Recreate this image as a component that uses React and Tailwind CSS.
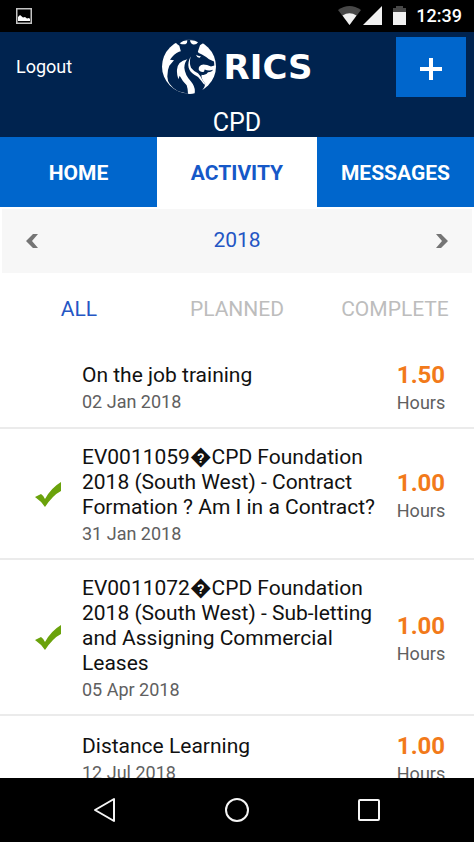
import React, { useState } from "react";

const tabs = ["HOME", "ACTIVITY", "MESSAGES"];
const filters = ["ALL", "PLANNED", "COMPLETE"];

const activities = [
    { id: 1, title: "On the job training", date: "02 Jan 2018", hours: "1.50", complete: false },
    {
        id: 2,
        title: "EV0011059\uFFFDCPD Foundation 2018 (South West) - Contract Formation ? Am I in a Contract?",
        date: "31 Jan 2018",
        hours: "1.00",
        complete: true,
    },
    {
        id: 3,
        title: "EV0011072\uFFFDCPD Foundation 2018 (South West) - Sub-letting and Assigning Commercial Leases",
        date: "05 Apr 2018",
        hours: "1.00",
        complete: true,
    },
    { id: 4, title: "Distance Learning", date: "12 Jul 2018", hours: "1.00", complete: false },
];

const StatusBar = () => (
    <div className="flex h-8 shrink-0 items-center justify-between bg-black pl-4 pr-3 text-white">
        <svg width="16" height="16" viewBox="0 0 16 16">
            <rect x="0.75" y="0.75" width="14.5" height="14.5" fill="none" stroke="#c4c4c4" strokeWidth="1.5" />
            <path d="M2 13V9l2-2 3 2.500 2-.500 2 1.500 2-.500 1 1v2z" fill="#fff" />
        </svg>
        <div className="flex items-center">
            <svg width="70" height="20" viewBox="0 0 70 20">
                <path d="M0 4Q11.500-4 23 4L11.500 19z" fill="#484848" />
                <path d="M4.500 9.500Q11.500 5 18.500 9.500L11.500 19z" fill="#f1f1f1" />
                <path d="M44 0v19H25z" fill="#f1f1f1" />
                <path d="M55 2h3V0h7v2h3v4H55z" fill="#484848" />
                <path d="M55 6h13v13H55z" fill="#f1f1f1" />
            </svg>
            <span className="ml-2 text-lg font-medium">12:39</span>
        </div>
    </div>
);

const Logo = () => (
    <div className="flex items-center gap-2">
        <svg width="54" height="55" viewBox="0 0 162 164">
            <circle cx="81" cy="82" r="81" fill="#fff" />
            <g fill="#00234f">
                {/* crown */}
                <path d="M36 0H126V10L114 18L106 42L58 42L52 20L44 14Z" />
                {/* head and mane */}
                <path d="M56 36L106 36Q110 44 120 46Q131 52 141 60L156 67L157 79L147 82Q135 76 124 76Q110 78 110 90Q113 100 126 98L128 91Q140 96 153 92Q150 99 138 99Q132 110 119 107Q116 116 126 129L130 134Q129 145 119 156L98 164L78 164L48 156Q16 138 16 112Q16 92 22 80L36 63L24 62Q36 44 51 38Z" />
            </g>
            <g fill="#fff">
                {/* crown jewels */}
                <path d="M53 12Q63 3 76 3Q77 11 70 15Q61 17 53 12Z" />
                <path d="M84 3Q98 2 108 9Q104 17 94 16Q85 13 84 3Z" />
                {/* mane strands */}
                <path d="M76 60Q46 66 45 92Q44 106 49 120L53 110Q62 128 74 138Q78 149 78 164Q89 165 98 162Q101 144 87 127Q69 109 67 86Q67 70 76 60Z" />
                <path d="M86 52Q81 72 87 86Q94 96 108 102Q116 110 122 123L133 139Q124 136 117 124Q111 113 97 107Q84 99 80 86Q76 70 86 52Z" />
                <path d="M102 47Q109 52 117 51L113 56Q105 57 102 47Z" />
            </g>
        </svg>
        <span className="font-['DejaVu_Sans'] text-[34px] leading-8 font-bold">RICS</span>
    </div>
);

const Header = () => (
    <header className="shrink-0 bg-[#00234f] text-white">
        <div className="grid grid-cols-[1fr_auto_1fr] items-start px-2 pt-[5px]">
            <button type="button" className="mt-4 justify-self-start px-2 text-lg">
                Logout
            </button>
            <div className="mt-0.5">
                <Logo />
            </div>
            <button
                type="button"
                aria-label="Add activity"
                className="flex h-[60px] w-[70px] items-center justify-center justify-self-end bg-[#0066cc] pt-1"
            >
                <svg width="24" height="24" viewBox="0 0 24 24">
                    <path d="M12 1v22M1 12h22" stroke="#fff" strokeWidth="4" />
                </svg>
            </button>
        </div>
        <h1 className="mt-3 text-center text-[25px] leading-7">CPD</h1>
    </header>
);

const TickIcon = () => (
    <svg width="28" height="26" viewBox="0 0 28 26">
        <path d="M1 15L7 12Q10 14 11 17Q17 6 27 0V9Q19 13 11 25Q7 19 1 15Z" fill="#6aa20b" />
    </svg>
);

const Chevron = ({ flip }) => (
    <svg width="12" height="14" viewBox="0 0 12 14" className={flip ? "rotate-180" : ""}>
        <path d="M7 0h5L6 7l6 7H7L0 7z" fill="#757575" />
    </svg>
);

const ActivityRow = ({ item }) => (
    <li className="flex items-center border-b-2 border-[#ebebeb] pt-4 pb-[10px]">
        <div className="flex w-[82px] shrink-0 justify-center pb-1 pl-[14px]">{item.complete && <TickIcon />}</div>
        <div className="min-w-0 flex-1">
            <h2 className="text-[21px] leading-[25px] text-[#111]">{item.title}</h2>
            <p className="text-lg leading-7 text-[#606060]">{item.date}</p>
        </div>
        <div className="w-[90px] shrink-0 pr-4 text-center">
            <p className="text-2xl leading-7 font-bold text-[#f27a1a]">{item.hours}</p>
            <p className="text-lg leading-7 text-[#606060]">Hours</p>
        </div>
    </li>
);

const App = () => {
    const [tab, setTab] = useState("ACTIVITY");
    const [filter, setFilter] = useState("ALL");
    const [year, setYear] = useState(2018);

    return (
        <div className="flex h-screen flex-col overflow-hidden bg-white font-[Roboto,sans-serif]">
            <StatusBar />
            <Header />

            <nav className="grid h-[70px] shrink-0 grid-cols-[1fr_160px_1fr]">
                {tabs.map((name) => (
                    <button
                        key={name}
                        type="button"
                        onClick={() => setTab(name)}
                        className={`pt-1 text-[21px] font-bold ${
                            tab === name ? "bg-white text-[#1558c8]" : "bg-[#0066cc] text-white"
                        }`}
                    >
                        {name}
                    </button>
                ))}
            </nav>

            <main className="flex-1 overflow-x-hidden overflow-y-auto [scrollbar-width:none]">
                {/* Year picker */}
                <div className="mx-0.5 mt-0.5 flex h-16 items-center justify-between bg-[#f7f7f7] px-6">
                    <button type="button" aria-label="Previous year" onClick={() => setYear(year - 1)}>
                        <Chevron />
                    </button>
                    <span className="text-[21px] text-[#2456c4]">{year}</span>
                    <button type="button" aria-label="Next year" onClick={() => setYear(year + 1)}>
                        <Chevron flip />
                    </button>
                </div>

                {/* Filters */}
                <div className="grid h-[72px] grid-cols-3">
                    {filters.map((name) => (
                        <button
                            key={name}
                            type="button"
                            onClick={() => setFilter(name)}
                            className={`pt-0.5 text-[21px] ${filter === name ? "text-[#2456c4]" : "text-[#bdbdbd]"}`}
                        >
                            {name}
                        </button>
                    ))}
                </div>

                <ul>
                    {activities.map((item) => (
                        <ActivityRow key={item.id} item={item} />
                    ))}
                </ul>
            </main>

            <footer className="flex h-16 shrink-0 items-center justify-center gap-[106px] bg-black">
                <button type="button" aria-label="Back">
                    <svg width="26" height="26" viewBox="0 0 26 26">
                        <path d="M22 2v22L3 13z" fill="none" stroke="#f5f5f5" strokeWidth="2" strokeLinejoin="round" />
                    </svg>
                </button>
                <button type="button" aria-label="Home">
                    <svg width="26" height="26" viewBox="0 0 26 26">
                        <circle cx="13" cy="13" r="11" fill="none" stroke="#f5f5f5" strokeWidth="2" />
                    </svg>
                </button>
                <button type="button" aria-label="Recent apps">
                    <svg width="26" height="26" viewBox="0 0 26 26">
                        <rect x="3" y="3" width="20" height="20" rx="1" fill="none" stroke="#f5f5f5" strokeWidth="2" />
                    </svg>
                </button>
            </footer>
        </div>
    );
};

export default App;
